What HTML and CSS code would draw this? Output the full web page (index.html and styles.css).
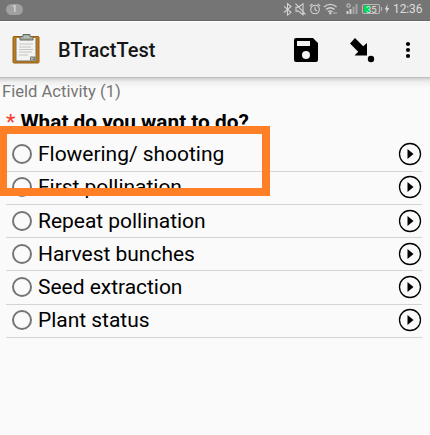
FILE: index.html
```html
<!DOCTYPE html>
<html lang="en">
<head>
<meta charset="utf-8">
<title>BTractTest</title>
<link rel="stylesheet" href="styles.css">
</head>
<body>
<header class="status">
  <span class="badge">1</span>
  <svg class="status-icons" width="104" height="20" viewBox="282 0 104 20" fill="none" stroke="#d2d2d2" stroke-width="1.1">
    <path d="M284 6.300l7 6-3.500 2.900V3.700l3.500 2.800-7 6"/>
    <path d="M296 7.300h2.400l4.600-3.500v11l-4.600-3.700H296zM295.500 3.700l10 10.600"/>
    <circle cx="315" cy="9.500" r="4.300"/><path d="M315 6.700v3l2 1.300M309.800 6l2.600-2.200M320.200 6l-2.600-2.200"/>
    <path d="M324 7q6.300-5.200 12.600 0M326 9.500q4.300-3.500 8.600 0M328 11.800q2.300-1.800 4.600 0" stroke-width="1.400"/><circle cx="330.300" cy="13.300" r=".7" fill="#d2d2d2"/><path d="M334 12v2M336 12v2" stroke-width=".8"/>
    <path d="M347.500 11v3M350.500 9v5" stroke-width="2"/><path d="M353.500 6.500V14M356.500 4V14" stroke="#a5a5a5" stroke-width="2"/><path d="M347 4h3v3h-3z" stroke-width=".8"/>
    <rect x="362.500" y="4.500" width="17" height="9" rx="1.500" stroke="#b9b9b9"/><path d="M364 5.500h6v7h-6z" fill="#00db55" stroke="none"/><path d="M381.500 7v4" stroke="#b9b9b9"/>
    <text class="charge" x="366" y="12.500">35</text>
  </svg>
  <svg class="bolt" width="6" height="10" viewBox="0 0 6 10"><path d="M3.500 0L.8 5.400h1.800L2 9.500 5.200 4H3.300z" fill="#d8d8d8"/></svg>
  <time class="clock">12:36</time>
</header>
<div class="appbar">
  <svg class="logo" width="30" height="34" viewBox="0 1 30 34">
    <rect x="2" y="4.500" width="26" height="26.500" rx="1" fill="#c47a0c" stroke="#925f19"/>
    <path d="M4.500 6h21v23.500h-21z" fill="#6f706d"/><path d="M5.500 6h19v22.500h-19z" fill="#f3f3f1"/>
    <path d="M8 12h14M8 15h12M8 17.500h14M8 20h13M8 23h9" stroke="#c4c4c4"/>
    <path d="M19 24.500h5.500v4H19z" fill="#777873"/><path d="M19.500 25l4 1-3 2.500z" fill="#b3b3ac"/>
    <path d="M9 8V4.500h3V2.500h7v2h3V8z" fill="#a3a99e" stroke="#666b62"/><path d="M12.500 5h6" stroke="#d0d4cb"/>
  </svg>
  <h1 class="title">BTractTest</h1>
  <svg class="actions" width="136" height="40" viewBox="290 29 136 40">
    <path fill-rule="evenodd" d="M296 37h17l5 5v17a2 2 0 0 1-2 2h-20a2 2 0 0 1-2-2V39a2 2 0 0 1 2-2zM297 40v5h13v-5zM306 50a4 4 0 1 0 0 8 4 4 0 0 0 0-8z"/>
    <path d="M355 37l8.200 8.200L367 42v12.500h-12.500l3.700-3.800L350 42.500z"/><circle cx="371" cy="58" r="3.200"/>
    <circle cx="408" cy="43" r="2.100"/><circle cx="408" cy="49" r="2.100"/><circle cx="408" cy="55" r="2.100"/>
  </svg>
</div>
<main class="form">
  <p class="crumb">Field Activity (1)</p>
  <h2 class="question"><span class="star">*</span> What do you want to do?</h2>
  <ul class="options">
    <li class="option"><i class="radio"></i><span class="label">Flowering/ shooting</span><svg class="go" viewBox="0 0 24 24"><circle cx="12" cy="12" r="10.500"/><path d="M9.500 7v10l6-5z"/></svg></li>
    <li class="option"><i class="radio"></i><span class="label">First pollination</span><svg class="go" viewBox="0 0 24 24"><circle cx="12" cy="12" r="10.500"/><path d="M9.500 7v10l6-5z"/></svg></li>
    <li class="option"><i class="radio"></i><span class="label">Repeat pollination</span><svg class="go" viewBox="0 0 24 24"><circle cx="12" cy="12" r="10.500"/><path d="M9.500 7v10l6-5z"/></svg></li>
    <li class="option"><i class="radio"></i><span class="label">Harvest bunches</span><svg class="go" viewBox="0 0 24 24"><circle cx="12" cy="12" r="10.500"/><path d="M9.500 7v10l6-5z"/></svg></li>
    <li class="option"><i class="radio"></i><span class="label">Seed extraction</span><svg class="go" viewBox="0 0 24 24"><circle cx="12" cy="12" r="10.500"/><path d="M9.500 7v10l6-5z"/></svg></li>
    <li class="option"><i class="radio"></i><span class="label">Plant status</span><svg class="go" viewBox="0 0 24 24"><circle cx="12" cy="12" r="10.500"/><path d="M9.500 7v10l6-5z"/></svg></li>
  </ul>
</main>
<div class="highlight"></div>
</body>
</html>
```
FILE: styles.css
```css
* { box-sizing: border-box; margin: 0; padding: 0; }
body { width: 430px; height: 435px; overflow: hidden; position: relative; background: #fafafa; color: #000; font-family: Roboto, sans-serif; }
.status { height: 21px; background: #757575; border-bottom: 1px solid #666; display: flex; align-items: flex-start; color: #ddd; }
.badge { width: 17px; height: 11px; margin: 4px 0 0 6px; border-radius: 6px; background: #a0a0a0; color: #eee; font-size: 9px; line-height: 11px; text-align: center; }
.status-icons { margin-left: 259px; }
.charge { fill: #e4e4e4; stroke: none; font-size: 9.5px; }
.bolt { margin: 4px 0 0 -2px; }
.clock { margin-left: 3px; font-size: 12px; letter-spacing: -0.1px; line-height: 19px; }
.appbar { height: 56px; background: #f4f4f4; display: flex; align-items: center; border-top: 1px solid #fff; }
.logo { margin-left: 11px; }
.title { width: 232px; margin-left: 17px; font-size: 20px; font-weight: 500; line-height: 24px; color: #161616; }
.actions { flex: none; }
.form { height: 358px; border-top: 1px solid #bcbfbc; background: linear-gradient(#d0d2d0, #eeefee 4px, #fafafa 10px); padding-top: 4px; }
.crumb { padding-left: 2px; font-size: 16.6px; line-height: 20px; color: #757575; }
.question { padding: 7px 0 0 6px; height: 36.6px; font-size: 20.8px; line-height: 26px; font-weight: 700; white-space: nowrap; }
.star { color: #f44336; font-weight: 500; }
.options { list-style: none; margin: 0 8px 0 6px; }
.option { height: 33.2px; padding-bottom: 1px; display: flex; align-items: center; border-bottom: 1px solid #d4d4d4; }
.radio { width: 20px; height: 20px; margin-left: 6px; border: 2px solid #757575; border-radius: 50%; }
.label { flex: 1; margin-left: 6px; font-size: 21px; letter-spacing: -0.03px; line-height: 26px; white-space: nowrap; }
.go { width: 24px; height: 24px; flex: none; fill: none; stroke: #000; stroke-width: 1.3; }
.go path { fill: #000; stroke: none; }
.highlight { position: absolute; left: 0; top: 126px; width: 270px; height: 70px; border: 8px solid #ff7f27; border-left-width: 7px; }
```
